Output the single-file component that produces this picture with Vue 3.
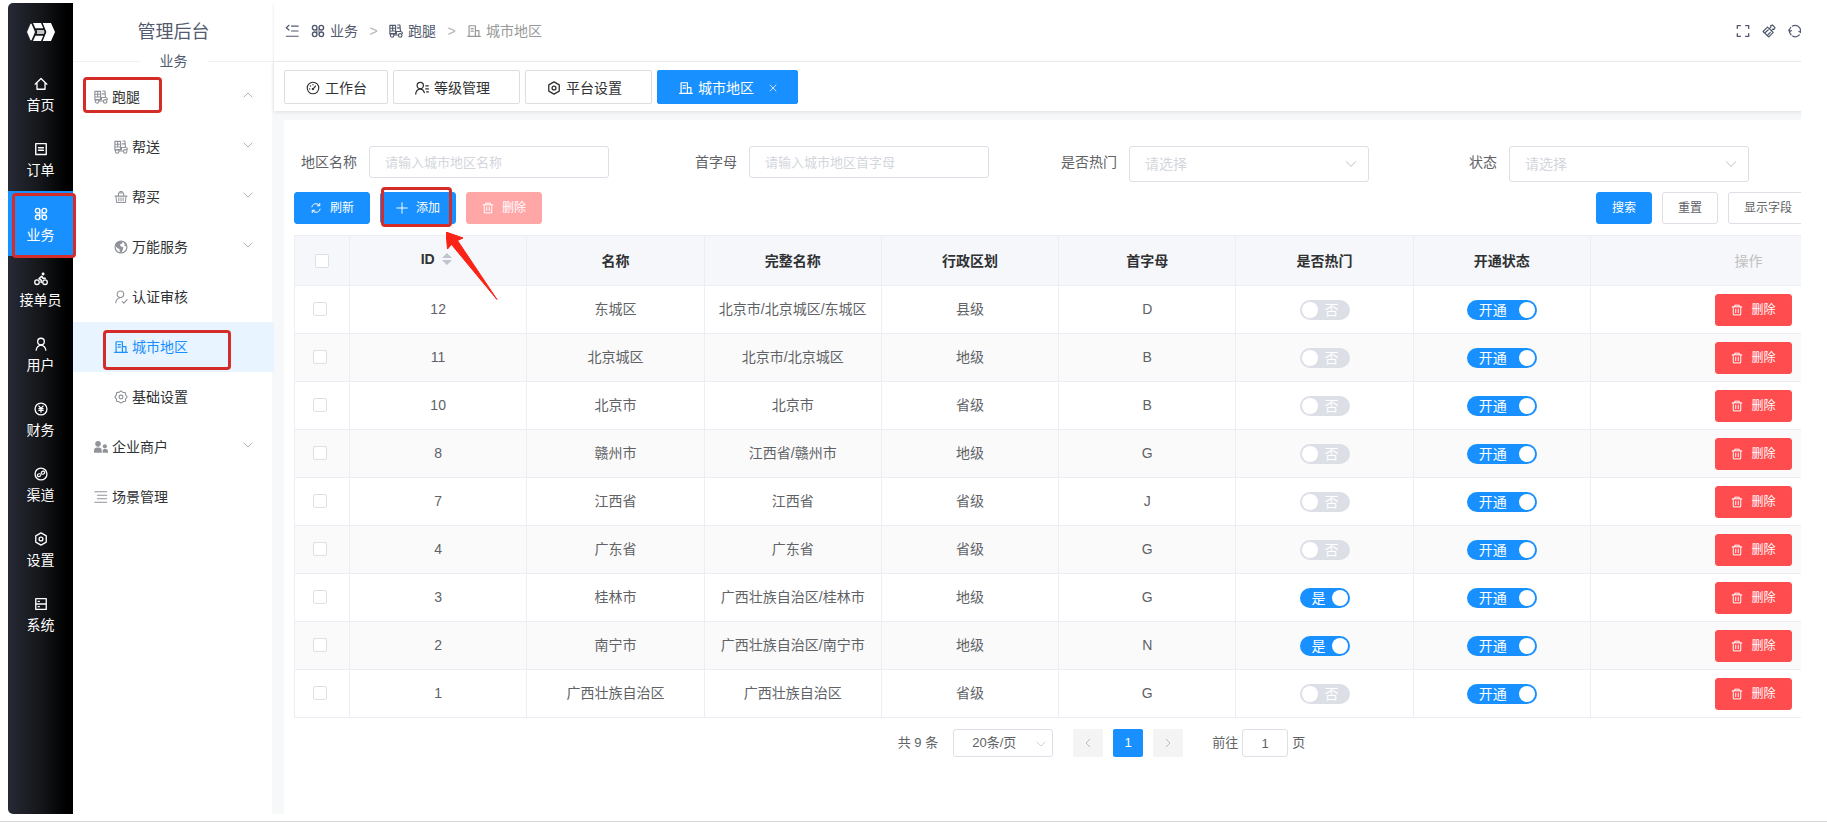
<script setup>
import { h, ref } from 'vue'

const line = (d, w = 1.3) => `<path d="${d}" fill="none" stroke="currentColor" stroke-width="${w}" stroke-linecap="round" stroke-linejoin="round"/>`
const solid = (d) => `<path d="${d}" fill="currentColor"/>`
const ring = (x, y, r, w = 1.3) => `<circle cx="${x}" cy="${y}" r="${r}" fill="none" stroke="currentColor" stroke-width="${w}"/>`
const dot = (x, y, r) => `<circle cx="${x}" cy="${y}" r="${r}" fill="currentColor"/>`

const scooter = line('M1 11.500V1.500h6.500V11M1 4.800h6.500M1 8h6.500M4.200 1.500V8M10 1.200h2.500l.6 6.800M8.500 8.600H13c1.600 0 2.300 1.200 2.300 2.300M6 12.600h4.700M9.500 4.500h3M1 11h7.500V8.600', 1.3) + ring(3.6, 13, 2, 1.3) + ring(12.8, 13, 2, 1.3)
const icons = {
  home: line('M1.3 8.2 8 1.7l6.7 6.5M3.4 7v7h9.2V7', 1.5),
  order: line('M2 1.8h12v12.4H2zM5.2 6.5h5.6M5.2 9.5h5.6', 1.6),
  business: ring(4.2, 4.2, 2.6, 1.6) + ring(11.8, 4.2, 2.6, 1.6) + ring(4.2, 11.8, 2.6, 1.6) + ring(11.8, 11.8, 2.6, 1.6) + line('M6.8 6.800h2.400v2.400H6.800z', 0.800),
  rider: ring(3.4, 11.7, 2.6, 1.5) + ring(12.6, 11.7, 2.6, 1.5) + line('M8.2 12V9.4L5.8 7.6l3-2.7 1.5 2.3h2.5', 1.8) + dot(10.4, 2.2, 1.7),
  user: ring(8, 5.2, 3.8, 1.5) + line('M2.5 15c.4-3.2 2.4-5.3 5.5-5.8 3.1.5 5.1 2.6 5.5 5.8M6.3 9.3h3.4', 1.5),
  finance: ring(8, 8, 6.8, 1.5) + line('M5.7 4.6 8 7.3l2.3-2.7M8 7.3v4.4M5.6 7.6h4.8M5.6 9.6h4.8', 1.4),
  channel: ring(8, 8, 6.8, 1.5) + line('M6.3 7.7c-2 .1-2.7 1.2-2.3 2.3.5 1.3 3 1.4 3.6-.4l1-3.6c.5-1.7 2.9-1.8 3.5-.4.4 1.2-.5 2.4-2.3 2.6', 1.4),
  setting: line('M8 1l6 3.5v7L8 15l-6-3.5v-7z', 1.5) + ring(8, 8, 2.2, 1.5),
  system: line('M2 1.8h12v12.4H2zM2 8h12M4.8 5h1.3M4.8 11h1.3', 1.5),
  scooter,
  basket: line('M1.2 7h13.6M2.2 7.2l.8 7h10l.8-7M5.5 9v3.2M8 9v3.2M10.5 9v3.2M5 6.8V3.4h6v3.4M6.7 3.2V1.8h2.6v1.4', 1.2),
  globe: ring(8, 8, 6.8, 1.4) + solid('M2 4.500 5 1.800 10 1.500 9.300 4 6.500 5.300 8 7.300l2.600 1-.4 2.600L8.400 14.500 6.600 14l-.2-3.400L3.800 9 1.500 6.800zM11.500 3l2 1.500 1.200 3-2.400-.6z'),
  verify: ring(7.4, 4.9, 3.7, 1.3) + line('M2 14.6c.3-3.1 2.3-5.2 4.8-5.8M9.4 13.2l1.8 1.7 3.8-4', 1.3),
  city: line('M2.4 14V2h7.2v12M9.6 7.5h4V14M.8 14.2h14.4M4.7 5.2h2.6M4.7 8.2h2.6', 1.4),
  gear: line('M8 1l2.1 1.7 2.6.1.6 2.6L15 8l-1.7 2.1-.2 2.7-2.7.5L8 15l-2.4-1.7-2.6-.4-.3-2.700L1 8l1.700-2.500.3-2.600 2.700-.2z', 1.3) + ring(8, 8, 2.2, 1.3),
  people: dot(4.6, 4.4, 3.2) + solid('M0 14.500V12C0 10 1.500 8.600 3.400 8.600h2.400C7.700 8.600 8.800 10 8.800 12v2.500z') + dot(12.4, 7.2, 2.4) + solid('M9.800 14.500v-1.500c0-1.600.8-2.600 2-2.600h1.600c1.500 0 2.600 1 2.600 2.600v1.500z'),
  list: line('M1 2h13.500M4 6h10.500M4 10h10.500M1 14h13.500', 1.4),
  fold: line('M7.500 2.500H15M7.500 8H15M1.500 14H15M4.500 1.500 1.500 4.200l3 2.700', 1.4),
  gauge: ring(8, 8, 6.600, 1.3) + line('M8 9.200l2.800-3.400M4 9h.3M5 5.500l.2.200M8 4v.3', 1.4) + dot(7.800, 9.200, 1.3),
  level: ring(6, 5.200, 3.600, 1.4) + line('M.8 15c.3-3.200 2.300-5.400 5.200-5.900 2.300.4 4 2 4.700 4.200M12.300 5.500h3M12.300 9h3M13.300 12.500h2', 1.4),
  full: line('M1.500 5V1.800H5M11 1.800h3.500V5M14.500 11v3.200H11M5 14.200H1.500V11', 1.5),
  brush: line('M6.300 3.600 1.200 8.500l6.600 6.300 5-5.200M6.300 3.600l6.500 6M8.200 5.500l2-1.900-.3-1.500 2-1 3 3-1 2-1.500-.2-1.900 2M4 9.500l3-2.700M7 12l2.500-2.500', 1.4),
  refresh: line('M3.500 12.300A6.500 6.500 0 0 1 3 4M5 2.300a6.500 6.500 0 0 1 9.500 6M13 12.500a6.500 6.500 0 0 1-7.800 1.300M.8 6.800 1.900 9l2-1.500M12.500 8.300l2 1.500 1.200-2', 1.400),
  reload: line('M2.500 6.500C3 4 5.200 2.300 8 2.300c2 0 3.800 1 4.800 2.700M13.500 9.500c-.5 2.500-2.700 4.200-5.500 4.200-2 0-3.800-1-4.800-2.700M13 1.800V5H9.800M3 14.200V11h3.200', 1.3),
  plus: line('M8 1v14M1 8h14', 1.3),
  trash: line('M1.500 3.800h13M5 3.500V1.500h6v2M3 4v10.500h10V4M6.300 7v4.500M9.700 7v4.500', 1.3),
  down: line('M1.500 4.800 8 11.200l6.500-6.400', 1.2),
  up: line('M1.500 11.200 8 4.800l6.500 6.400', 1.2),
  left: line('M10.800 2 5 8l5.800 6', 1.5),
  right: line('M5.200 2 11 8l-5.800 6', 1.5),
  close: line('M2 2l12 12M14 2 2 14', 1.5)
}
const Icon = (props) => h('svg', { viewBox: '0 0 16 16', 'aria-hidden': 'true', innerHTML: icons[props.name] })
Icon.props = ['name']

const modules = [
  ['home', '首页'], ['order', '订单'], ['business', '业务'], ['rider', '接单员'], ['user', '用户'],
  ['finance', '财务'], ['channel', '渠道'], ['setting', '设置'], ['system', '系统']
]
const menu = [
  { icon: 'scooter', text: '跑腿', arrow: 'up', mark: 'mark-errand' },
  { icon: 'scooter', text: '帮送', arrow: 'down', child: true },
  { icon: 'basket', text: '帮买', arrow: 'down', child: true },
  { icon: 'globe', text: '万能服务', arrow: 'down', child: true },
  { icon: 'verify', text: '认证审核', child: true },
  { icon: 'city', text: '城市地区', child: true, active: true, mark: 'mark-city' },
  { icon: 'gear', text: '基础设置', child: true },
  { icon: 'people', text: '企业商户', arrow: 'down' },
  { icon: 'list', text: '场景管理' }
]
const tabs = [
  { icon: 'gauge', text: '工作台', fixed: true },
  { icon: 'level', text: '等级管理' },
  { icon: 'setting', text: '平台设置' },
  { icon: 'city', text: '城市地区', active: true }
]
const rows = ref([
  [12, '东城区', '北京市/北京城区/东城区', '县级', 'D', false],
  [11, '北京城区', '北京市/北京城区', '地级', 'B', false],
  [10, '北京市', '北京市', '省级', 'B', false],
  [8, '赣州市', '江西省/赣州市', '地级', 'G', false],
  [7, '江西省', '江西省', '省级', 'J', false],
  [4, '广东省', '广东省', '省级', 'G', false],
  [3, '桂林市', '广西壮族自治区/桂林市', '地级', 'G', true],
  [2, '南宁市', '广西壮族自治区/南宁市', '地级', 'N', true],
  [1, '广西壮族自治区', '广西壮族自治区', '省级', 'G', false]
].map(([id, name, full, level, letter, hot]) => ({ id, name, full, level, letter, hot, open: true })))
const goto = ref('1')
</script>

<template>
  <div class="page">
    <div class="frame">
      <nav class="rail" aria-label="模块">
        <div class="logo">
          <svg viewBox="0 0 28 18" aria-hidden="true">
            <path d="M0 9 3.500.8h1L8 9l-3.500 8.200h-1z" fill="#fff" />
            <path d="M6 0h8l2.300 5.300H8.400z" fill="#fff" />
            <path d="M6 18h8l2.300-5.300H8.400z" fill="#fff" />
            <path d="M9.600 7h7.200l.8 2-.8 2H9.600l.6-2z" fill="#c4c6ca" />
            <path d="M15.700 0H24l4 9-4 9h-8.300l3.700-9z" fill="#fff" />
          </svg>
        </div>
        <a v-for="[icon, text] in modules" :key="text" href="#" class="module" :class="{ active: icon === 'business' }">
          <Icon :name="icon" class="icon-14" />
          <span>{{ text }}</span>
          <i v-if="icon === 'business'" class="mark mark-module"></i>
        </a>
      </nav>

      <aside class="side">
        <h1>管理后台</h1>
        <div class="divider"><span>业务</span></div>
        <nav class="menu" aria-label="业务">
          <a v-for="m in menu" :key="m.text" href="#" :class="{ child: m.child, active: m.active }">
            <Icon :name="m.icon" class="icon-14" />
            <span class="menu-text">{{ m.text }}</span>
            <Icon v-if="m.arrow" :name="m.arrow" class="icon-10 arrow" />
            <i v-if="m.mark" class="mark" :class="m.mark"></i>
          </a>
        </nav>
      </aside>

      <main class="main">
        <header class="header">
          <button class="icon-btn fold" aria-label="收起菜单"><Icon name="fold" class="icon-14" /></button>
          <nav class="crumbs" aria-label="路径">
            <a href="#"><Icon name="business" class="icon-14" />业务</a>
            <b>&gt;</b>
            <a href="#"><Icon name="scooter" class="icon-14" />跑腿</a>
            <b>&gt;</b>
            <span class="last"><Icon name="city" class="icon-14" />城市地区</span>
          </nav>
          <div class="tools">
            <button class="icon-btn" aria-label="全屏"><Icon name="full" class="icon-14" /></button>
            <button class="icon-btn" aria-label="清除缓存"><Icon name="brush" class="icon-14" /></button>
            <button class="icon-btn" aria-label="刷新页面"><Icon name="refresh" class="icon-14" /></button>
          </div>
        </header>

        <div class="tabs">
          <a v-for="t in tabs" :key="t.text" href="#" :class="{ fixed: t.fixed, active: t.active }">
            <Icon :name="t.icon" class="icon-14" />{{ t.text }}
            <Icon v-if="t.active" name="close" class="icon-8" />
          </a>
        </div>

        <section class="card">
          <form class="filters" @submit.prevent>
            <div class="field">
              <label for="f-name">地区名称</label>
              <input id="f-name" type="text" placeholder="请输入城市地区名称" />
            </div>
            <div class="field">
              <label for="f-letter">首字母</label>
              <input id="f-letter" type="text" placeholder="请输入城市地区首字母" />
            </div>
            <div class="field">
              <label for="f-hot">是否热门</label>
              <div class="select"><select id="f-hot"><option>请选择</option></select><Icon name="down" class="icon-12" /></div>
            </div>
            <div class="field">
              <label for="f-state">状态</label>
              <div class="select"><select id="f-state"><option>请选择</option></select><Icon name="down" class="icon-12" /></div>
            </div>
          </form>

          <div class="toolbar">
            <button class="btn primary"><Icon name="reload" class="icon-12" />刷新</button>
            <div class="add">
              <button class="btn primary"><Icon name="plus" class="icon-12" />添加</button>
              <i class="mark mark-add"></i>
              <svg class="pointer" viewBox="0 0 52 68" aria-hidden="true">
                <path d="M0 0 17 6 11.500 8.500 51 67.500 5.500 12.500 1.500 17z" fill="#fb2315" stroke="#fb2315" stroke-width="1" stroke-linejoin="round" />
              </svg>
            </div>
            <button class="btn danger" disabled><Icon name="trash" class="icon-12" />删除</button>
            <div class="query">
              <button class="btn primary">搜索</button>
              <button class="btn">重置</button>
              <button class="btn">显示字段</button>
            </div>
          </div>

          <table>
            <colgroup><col class="c-check" /><col span="7" /><col class="c-action" /></colgroup>
            <thead>
              <tr>
                <th><input type="checkbox" aria-label="全选" /></th>
                <th class="sortable">
                  <span class="sort">ID
                    <svg viewBox="0 0 10 12" aria-hidden="true"><path d="M0 5 5 0l5 5zM0 7l5 5 5-5z" fill="#c0c4cc" /></svg>
                  </span>
                </th>
                <th>名称</th><th>完整名称</th><th>行政区划</th><th>首字母</th><th>是否热门</th><th>开通状态</th>
                <th class="muted">操作</th>
              </tr>
            </thead>
            <tbody>
              <tr v-for="r in rows" :key="r.id">
                <td class="check"><input type="checkbox" :aria-label="'选择 ' + r.name" /></td>
                <td>{{ r.id }}</td>
                <td>{{ r.name }}</td>
                <td>{{ r.full }}</td>
                <td>{{ r.level }}</td>
                <td>{{ r.letter }}</td>
                <td class="toggle">
                  <label class="switch short" :class="{ on: r.hot }"><input v-model="r.hot" type="checkbox" /><span>{{ r.hot ? '是' : '否' }}</span><i></i></label>
                </td>
                <td class="toggle">
                  <label class="switch" :class="{ on: r.open }"><input v-model="r.open" type="checkbox" /><span>{{ r.open ? '开通' : '关闭' }}</span><i></i></label>
                </td>
                <td class="action"><button class="btn danger"><Icon name="trash" class="icon-12" />删除</button></td>
              </tr>
            </tbody>
          </table>

          <div class="pager">
            <span>共 9 条</span>
            <div class="size"><select aria-label="每页条数"><option>20条/页</option></select><Icon name="down" class="icon-10" /></div>
            <button class="step" aria-label="上一页" disabled><Icon name="left" class="icon-10" /></button>
            <button class="step current">1</button>
            <button class="step" aria-label="下一页" disabled><Icon name="right" class="icon-10" /></button>
            <label class="goto">前往<input v-model="goto" type="text" />页</label>
          </div>
        </section>
      </main>
    </div>
  </div>
</template>

<style>
body { background: #fff; }
</style>

<style scoped>
.page, .page * { box-sizing: border-box; }
.page {
  min-height: 100vh;
  display: flex;
  padding: 3px 26px 7px 8px;
  border-bottom: 1px solid #d8d8d8;
  font-family: "Liberation Sans", "Noto Sans CJK SC", sans-serif;
  font-size: 14px;
  line-height: 20px;
  color: #606266;
}
.frame { flex: 1; min-width: 0; display: flex; overflow: hidden; border-radius: 5px 0 0 5px; }
a { color: inherit; text-decoration: none; }
svg { display: block; flex: none; }
button, input, select { font: inherit; color: inherit; margin: 0; }
button { cursor: pointer; }
.icon-8 { width: 8px; height: 8px; }
.icon-10 { width: 10px; height: 10px; }
.icon-12 { width: 12px; height: 12px; }
.icon-14 { width: 14px; height: 14px; }

.mark { position: absolute; border: 3px solid #d32c29; border-radius: 4px; pointer-events: none; z-index: 2; }
.mark-module { inset: 2px -3px -2px 4px; }
.mark-errand { inset: 5px 112px 9px 10px; }
.mark-city { inset: 8px 43px 2px 30px; }
.mark-add { inset: -5px 4px -3px 1px; }

.rail { flex: none; width: 65px; background: linear-gradient(90deg, #272a35 0%, #14161a 50%, #000 90%); color: #fff; position: relative; z-index: 2; }
.logo { height: 58px; display: flex; align-items: center; justify-content: center; }
.logo svg { width: 28px; height: 18px; }
.module { position: relative; height: 65px; display: flex; flex-direction: column; align-items: center; justify-content: center; gap: 4px; padding-top: 4px; }
.module.active { background: #1890ff; }

.side { flex: none; width: 201px; background: #fff; color: #303133; }
h1 { margin: 0; height: 48px; line-height: 58px; font-size: 18px; font-weight: 400; text-align: center; color: #515a6e; }
.divider { display: flex; align-items: center; gap: 20px; color: #515a6e; }
.divider::before, .divider::after { content: ""; flex: 1; height: 1px; background: #f0f0f0; }
.menu { margin-top: 1px; }
.menu a { position: relative; display: flex; align-items: center; gap: 4px; height: 50px; padding: 0 21px; }
.menu a.child { padding-left: 41px; }
.menu a > svg { color: #909399; }
.menu a.active, .menu a.active > svg { color: #1890ff; }
.menu a.active { background: #e8f4ff; }
.menu .arrow { margin: -4px 0 0 auto; }

.main { flex: 1; min-width: 0; margin-right: -118px; display: flex; flex-direction: column; background: #f6f8f9; box-shadow: 0 0 3px rgba(0, 21, 41, .12); }
.header { height: 59px; flex: none; display: flex; align-items: center; padding: 0 117px 2px 11px; background: #fff; border-bottom: 1px solid #f0f0f0; color: #515a6e; }
.icon-btn { padding: 0; border: 0; background: none; color: #515a6e; }
.fold { margin-right: 12px; }
.crumbs { display: flex; align-items: center; }
.crumbs a, .crumbs span { display: flex; align-items: center; gap: 5px; }
.crumbs b { width: 31px; text-align: center; font-weight: 400; color: #b0b4bb; }
.crumbs .last { color: #999; }
.tools { margin-left: auto; display: flex; gap: 12px; }
.tabs { flex: none; display: flex; gap: 5px; padding: 8px 10px 7px; background: #fff; box-shadow: 0 1px 4px rgba(0, 21, 41, .1); color: #303133; }
.tabs a { display: flex; align-items: center; gap: 5px; height: 34px; padding: 2px 29px 0 21px; border: 1px solid #dcdee2; border-radius: 2px; }
.tabs a.fixed { padding-right: 20px; }
.tabs a.active { padding-right: 20px; background: #1890ff; border-color: #1890ff; color: #fff; }
.tabs .icon-8 { margin-left: 10px; }

.card { flex: 1; margin: 9px 0 0 10px; padding: 26px 10px 0; background: #fff; }
.filters { display: grid; grid-template-columns: repeat(4, 380px); margin-left: -5px; }
.field { display: flex; align-items: flex-start; }
.field label { width: 80px; padding-right: 12px; line-height: 32px; text-align: right; white-space: nowrap; }
.field input, .select select { width: 240px; height: 32px; padding: 0 15px; border: 1px solid #dcdfe6; border-radius: 3px; background: #fff; outline: 0; }
.field input { font-size: 13px; }
.field input::placeholder { color: #d3d6dc; opacity: 1; }
.select, .size { position: relative; }
.select select { height: 36px; color: #d3d6dc; appearance: none; }
.select svg { position: absolute; right: 12px; top: 12px; color: #b4b8c0; pointer-events: none; }

.toolbar { display: flex; gap: 10px; margin: 10px 0 11px; }
.btn { display: inline-flex; align-items: center; justify-content: center; gap: 8px; height: 32px; padding: 0 15px; border: 1px solid #dcdfe6; border-radius: 3px; background: #fff; font-size: 12px; line-height: 12px; white-space: nowrap; }
.btn.primary { background: #1890ff; border-color: #1890ff; color: #fff; }
.btn.danger { background: #ff4d4f; border-color: #ff4d4f; color: #fff; }
.btn.danger:disabled { background: #ffa6a7; border-color: #ffa6a7; cursor: default; }
.add { position: relative; display: flex; }
.pointer { position: absolute; left: 66px; top: 40px; width: 52px; height: 68px; z-index: 3; pointer-events: none; }
.query { display: flex; gap: 10px; margin-left: auto; margin-right: 101px; }

table { width: 100%; table-layout: fixed; border-collapse: separate; border-spacing: 0; border: solid #ebeef5; border-width: 1px 0 0 1px; text-align: center; }
.c-check { width: 55px; }
.c-action { width: 318px; }
th, td { padding: 0; border: solid #ebeef5; border-width: 0 1px 1px 0; vertical-align: middle; }
th { height: 50px; background: #f5f7fa; color: #303133; font-weight: 700; }
th.muted { padding-right: 2px; color: #c0c0c0; font-weight: 400; }
th.sortable { padding: 0 4px 3px 0; }
td { height: 48px; padding-bottom: 2px; }
td.toggle { padding-bottom: 0; }
tbody tr:nth-child(even) { background: #fafafa; }
th input, td.check input { appearance: none; display: block; width: 14px; height: 14px; margin: 0 auto; border: 1px solid #dcdfe6; border-radius: 2px; background: #fff; }
td.check { padding-right: 4px; }
.sort { display: inline-flex; align-items: center; gap: 7px; }
.sort svg { width: 10px; height: 12px; }
.switch { display: inline-flex; align-items: center; flex-direction: row-reverse; gap: 7px; height: 20px; padding: 0 11px 0 2px; border-radius: 10px; background: #dcdfe6; color: #fff; vertical-align: middle; position: relative; cursor: pointer; }
.switch.on { flex-direction: row; gap: 12px; padding: 0 2px 0 12px; background: #1890ff; }
.switch.short.on { gap: 6px; }
.switch input { position: absolute; inset: 0; opacity: 0; }
.switch i { width: 16px; height: 16px; border-radius: 50%; background: #fff; }
td.action { padding: 0 0 0 8px; }
.action .btn { vertical-align: middle; }

.pager { display: flex; align-items: center; justify-content: center; gap: 10px; margin-top: 11px; font-size: 13px; }
.size { margin: 0 10px 0 5px; }
.size select { width: 100px; height: 28px; padding: 0 18px; border: 1px solid #dcdfe6; border-radius: 3px; background: #fff; appearance: none; }
.size svg { position: absolute; right: 7px; top: 10px; color: #c0c4cc; pointer-events: none; }
.step { width: 30px; height: 28px; padding: 0; display: flex; align-items: center; justify-content: center; border: 0; border-radius: 2px; background: #f4f4f5; color: #b4b8c0; }
.step.current { background: #1890ff; color: #fff; }
.goto { display: flex; align-items: center; gap: 4px; margin-left: 19px; }
.goto input { width: 46px; height: 28px; padding: 0 3px; border: 1px solid #dcdfe6; border-radius: 3px; text-align: center; }
</style>
